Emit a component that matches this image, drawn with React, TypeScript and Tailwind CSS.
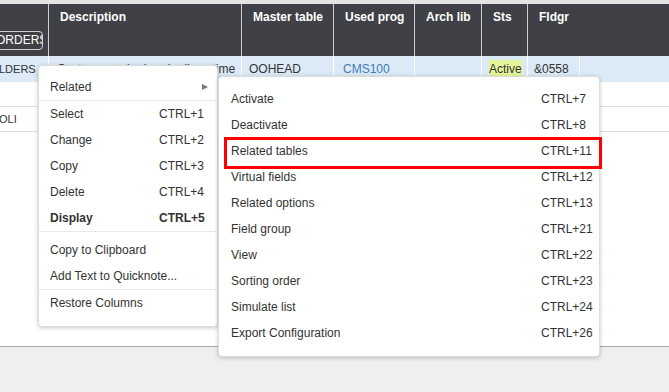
import React from 'react';

type Item = { label: string; key?: string; bold?: boolean; sub?: boolean };

const mainMenu: (Item | 'sep')[] = [
  { label: 'Related', sub: true },
  'sep',
  { label: 'Select', key: 'CTRL+1' },
  { label: 'Change', key: 'CTRL+2' },
  { label: 'Copy', key: 'CTRL+3' },
  { label: 'Delete', key: 'CTRL+4' },
  { label: 'Display', key: 'CTRL+5', bold: true },
  'sep',
  { label: 'Copy to Clipboard' },
  { label: 'Add Text to Quicknote...' },
  'sep',
  { label: 'Restore Columns' },
];

const subMenu: Item[] = [
  { label: 'Activate', key: 'CTRL+7' },
  { label: 'Deactivate', key: 'CTRL+8' },
  { label: 'Related tables', key: 'CTRL+11' },
  { label: 'Virtual fields', key: 'CTRL+12' },
  { label: 'Related options', key: 'CTRL+13' },
  { label: 'Field group', key: 'CTRL+21' },
  { label: 'View', key: 'CTRL+22' },
  { label: 'Sorting order', key: 'CTRL+23' },
  { label: 'Simulate list', key: 'CTRL+24' },
  { label: 'Export Configuration', key: 'CTRL+26' },
];

const cols = 'grid grid-cols-[48px_193px_92px_81px_67px_46px_52px_1fr]';

const headers = ['', 'Description', 'Master table', 'Used prog', 'Arch lib', 'Sts', 'Fldgr', ''];

const App: React.FC = () => {
  return (
    <div className="relative h-[392px] w-[669px] overflow-hidden flex flex-col font-['Liberation_Sans',Arial,sans-serif] text-[12px] text-[#333]">
      <div className="h-[347px] bg-white border-b border-[#ababab] flex flex-col">
        <div className="h-[4px] bg-[#e4e4e4]" />

        {/* header */}
        <div className={`${cols} h-[52px] bg-[#404146] text-white font-bold leading-[14px]`}>
          {headers.map((h, i) => (
            <div key={i} className={`pt-[6px] pl-[11px] ${i > 0 && i < 7 ? 'border-l border-[#d0d0d0]' : ''}`}>
              {i === 0 ? (
                <div className="mt-[21px] -ml-[24px] w-[56px] h-[19px] border border-[#cfcfcf] rounded-[4px] overflow-hidden whitespace-nowrap font-normal leading-[17px] pl-[8px]">
                  ORDERS
                </div>
              ) : (
                h
              )}
            </div>
          ))}
        </div>

        {/* rows */}
        <div className={`${cols} h-[26px] bg-[#dbeaf6] leading-[26px]`}>
          <div className="overflow-hidden whitespace-nowrap -ml-[1px] text-[11px]">LDERS</div>
          <div className="border-l border-white pl-[8px] overflow-hidden whitespace-nowrap">Customer order header lines time</div>
          <div className="border-l border-white pl-[7px]">OOHEAD</div>
          <div className="border-l border-white pl-[9px] text-[#3f7bb7]">CMS100</div>
          <div className="border-l border-white" />
          <div className="border-l border-white pl-[7px] flex items-center">
            <span className="inline-block bg-[#e5f59a] leading-[18px]">Active</span>
          </div>
          <div className="border-l border-white pl-[6px]">&amp;0558</div>
          <div className="border-l border-white" />
        </div>
        <div className="h-[25px] border-b border-[#dedede]" />
        <div className="h-[25px] border-b border-[#dedede] leading-[24px]">
          <div className="-ml-[1px] text-[11px]">OLI</div>
        </div>
      </div>
      <div className="flex-1 bg-[#efefef]" />

      {/* context menu */}
      <div className="absolute left-[38px] top-[65px] w-[180px] bg-white border border-[#dcdcdc] rounded-[4px] shadow-[0_1px_4px_rgba(0,0,0,0.22)] pt-[8px] pb-[10px]">
        {mainMenu.map((it, i) =>
          it === 'sep' ? (
            <div key={i} className={`h-px bg-[#e8e8e8] ${i === 7 ? 'mb-[5px]' : ''}`} />
          ) : (
            <div key={i} className={`relative grid grid-cols-[109px_1fr] h-[26px] items-center pl-[11px] ${it.bold ? 'font-bold' : ''}`}>
              <span className="whitespace-nowrap">{it.label}</span>
              <span>{it.key}</span>
              {it.sub && (
                <svg className="absolute left-[163px] top-[10px]" width="6" height="6" viewBox="0 0 6 6">
                  <path d="M0 0 L6 3 L0 6 Z" fill="#777" />
                </svg>
              )}
            </div>
          )
        )}
      </div>

      {/* submenu */}
      <div className="absolute left-[218px] top-[76px] w-[382px] bg-white border border-[#dcdcdc] rounded-[4px] shadow-[0_1px_4px_rgba(0,0,0,0.22)] pt-[9px] pb-[10px]">
        {subMenu.map((it, i) => (
          <div key={i} className="grid grid-cols-[310px_1fr] h-[26px] items-center pl-[12px]">
            <span>{it.label}</span>
            <span>{it.key}</span>
          </div>
        ))}
      </div>

      {/* highlight */}
      <div className="absolute left-[224px] top-[137px] w-[378px] h-[32px] border-[3px] border-[#ff0000]" />
    </div>
  );
};

export default App;
